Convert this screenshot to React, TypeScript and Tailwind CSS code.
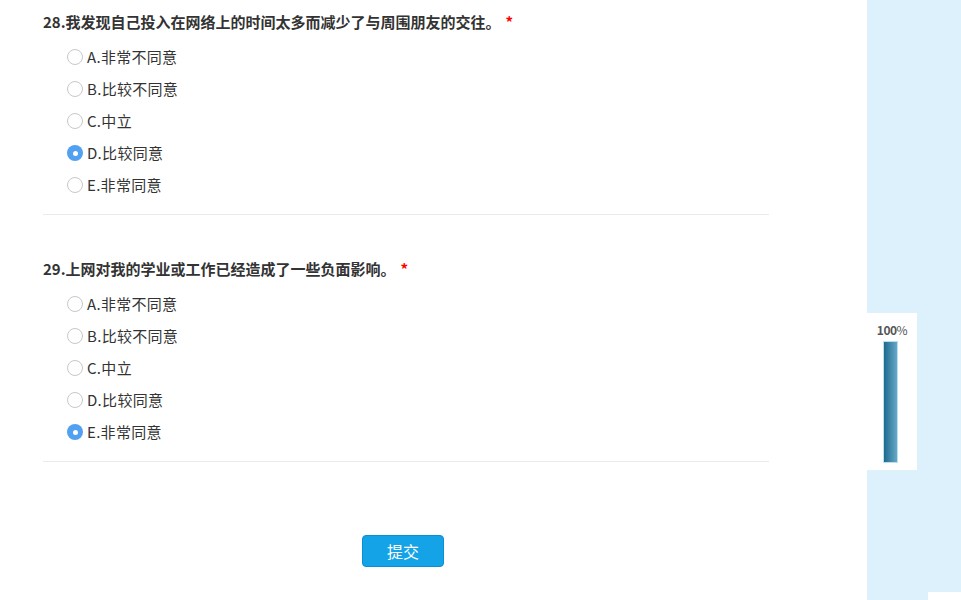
import React from 'react';

type Q = { no: number; title: string; options: string[]; picked: number };

const QUESTIONS: Q[] = [
  {
    no: 28,
    title: '我发现自己投入在网络上的时间太多而减少了与周围朋友的交往。',
    options: ['A.非常不同意', 'B.比较不同意', 'C.中立', 'D.比较同意', 'E.非常同意'],
    picked: 3,
  },
  {
    no: 29,
    title: '上网对我的学业或工作已经造成了一些负面影响。',
    options: ['A.非常不同意', 'B.比较不同意', 'C.中立', 'D.比较同意', 'E.非常同意'],
    picked: 4,
  },
];

const font = { fontFamily: '"Noto Sans CJK SC", "Noto Sans", sans-serif' };

function Radio({ on }: { on: boolean }) {
  return on ? (
    <span className="w-[16px] h-[16px] rounded-full bg-[#52a0f2] flex items-center justify-center shrink-0">
      <span className="w-[5px] h-[5px] rounded-full bg-white" />
    </span>
  ) : (
    <span className="w-[16px] h-[16px] rounded-full border border-[#c8c8c8] bg-white shrink-0" />
  );
}

function Question({ q, first }: { q: Q; first?: boolean }) {
  return (
    <div className={first ? 'pt-[12px]' : 'pt-[44px]'}>
      <p className="text-[15px] leading-[20px] font-bold text-[#333]">
        {q.no}.{q.title}
        <span className="text-[#f00] ml-[5px]">*</span>
      </p>
      <div className="mt-[9px] pl-[24px] pb-[13px] border-b border-[#ebebeb]">
        {q.options.map((o, i) => (
          <div key={o} className="h-[32px] flex items-center gap-[4px]">
            <Radio on={i === q.picked} />
            <span className="text-[15px] text-[#333] tracking-[0.3px]">{o}</span>
          </div>
        ))}
      </div>
    </div>
  );
}

export default function App() {
  return (
    <div className="w-[961px] h-[600px] flex bg-white overflow-hidden" style={font}>
      {/* main */}
      <div className="w-[867px] shrink-0">
        <div className="ml-[43px] w-[726px]">
          {QUESTIONS.map((q, i) => (
            <Question key={q.no} q={q} first={i === 0} />
          ))}
        </div>
        <div className="pt-[73px] pl-[362px]">
          <button className="w-[82px] h-[32px] rounded-[4px] bg-[#15a3e8] border border-[#0b8fd3] text-white text-[16px]">
            提交
          </button>
        </div>
      </div>

      {/* sidebar */}
      <div className="flex-1 bg-[#dcf1fc] flex flex-col">
        <div className="mt-[313px] w-[50px] h-[157px] bg-white flex flex-col items-center">
          <p className="mt-[9px] text-[12px] leading-[16px] font-bold text-[#555] tracking-[-0.5px]">
            100<span className="font-normal">%</span>
          </p>
          <div className="mt-[3px] mr-[3px] w-[15px] h-[122px] border border-[#bcdff0] bg-gradient-to-r from-[#1a6a90] to-[#66a9c6]" />
        </div>
        <div className="flex-1" />
        <div className="ml-auto w-[33px] h-[8px] bg-white" />
      </div>
    </div>
  );
}
